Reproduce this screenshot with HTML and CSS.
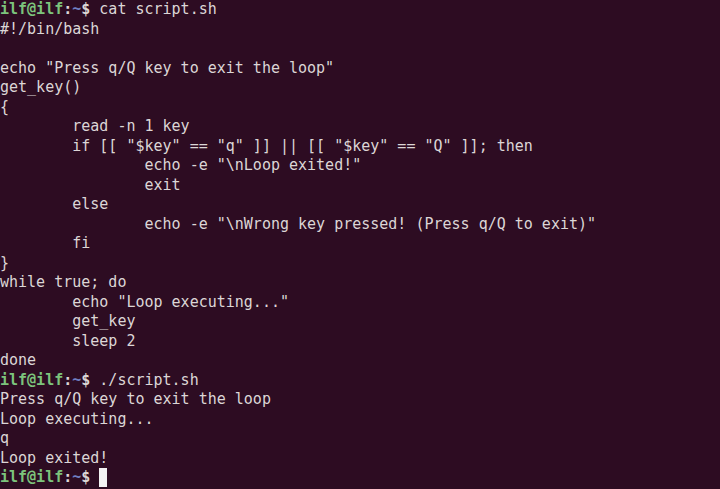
FILE: index.html
```html
<!DOCTYPE html>
<html>
<head>
<meta charset="utf-8">
<link rel="stylesheet" href="styles.css">
</head>
<body>
<pre class="term"><span class="user">ilf@ilf</span><span class="sep">:</span><span class="path">~</span><span class="sep">$</span> cat script.sh
#!/bin/bash

echo "Press q/Q key to exit the loop"
get_key()
{
	read -n 1 key
	if [[ "$key" == "q" ]] || [[ "$key" == "Q" ]]; then
		echo -e "\nLoop exited!"
		exit
	else
		echo -e "\nWrong key pressed! (Press q/Q to exit)"
	fi
}
while true; do
	echo "Loop executing..."
	get_key
	sleep 2
done
<span class="user">ilf@ilf</span><span class="sep">:</span><span class="path">~</span><span class="sep">$</span> ./script.sh
Press q/Q key to exit the loop
Loop executing...
q
Loop exited!
<span class="user">ilf@ilf</span><span class="sep">:</span><span class="path">~</span><span class="sep">$</span> <span class="cursor"> </span></pre>
</body>
</html>
```
FILE: styles.css
```css
html, body {
  margin: 0;
  padding: 0;
  background: #2d0c22;
  height: 100%;
  overflow: hidden;
}
.term {
  margin: 0;
  padding: 0 0 0 0;
  font-family: "DejaVu Sans Mono", "Liberation Mono", monospace;
  font-size: 15px;
  line-height: 19.5px;
  color: #dcd6d6;
  tab-size: 8;
  white-space: pre;
}
.user {
  color: #7cc47c;
  font-weight: bold;
}
.sep {
  color: #dcd6d6;
  font-weight: bold;
}
.path {
  color: #6f7fc2;
  font-weight: bold;
}
.cursor {
  display: inline-block;
  width: 8px;
  height: 19px;
  background: #f2f2f2;
  vertical-align: top;
}
```
